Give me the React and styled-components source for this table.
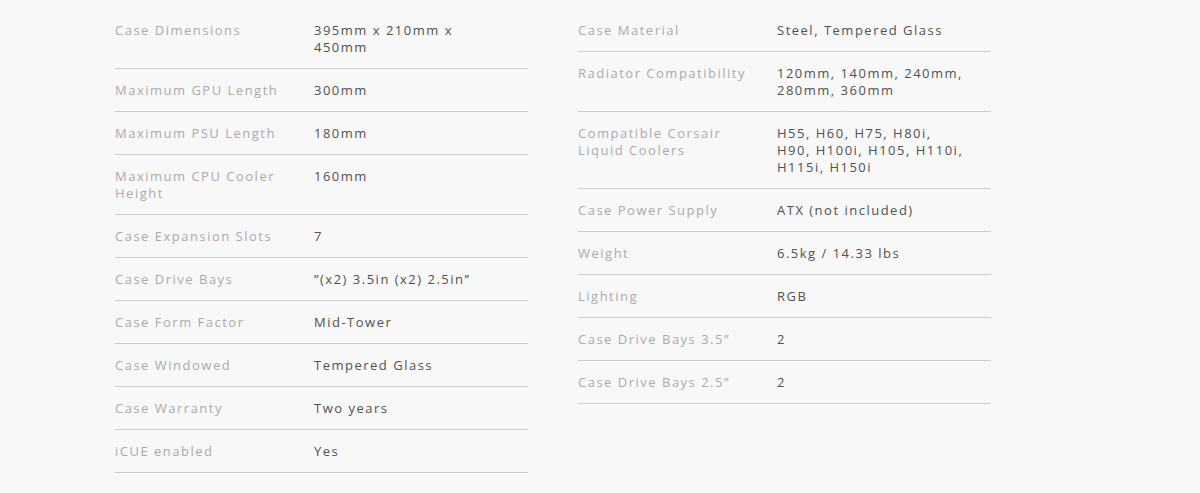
import React from "react";
import styled, { createGlobalStyle } from "styled-components";

const Global = createGlobalStyle`
  html, body { margin: 0; padding: 0; background: #f8f8f8; }
  body { padding: 9px 0 0; font-family: "Open Sans", "Liberation Sans", sans-serif; }
`;

const Page = styled.div`
  display: flex;
  gap: 50px;
  padding-left: 115px;
  align-items: flex-start;
`;

const Column = styled.div`
  width: 413px;
  display: flex;
  flex-direction: column;
`;

const Row = styled.div`
  display: grid;
  grid-template-columns: 199px 190px;
  padding: 13px 0 12px;
  border-bottom: 1px solid #cdcdcd;
  font-size: 13px;
  line-height: 17px;
  letter-spacing: 1.5px;
`;

const Label = styled.div`
  color: #aaaaaa;
  padding-right: 16px;
`;

const Value = styled.div`
  color: #505050;
  font-weight: 500;
`;

const left = [
  ["Case Dimensions", "395mm x 210mm x 450mm"],
  ["Maximum GPU Length", "300mm"],
  ["Maximum PSU Length", "180mm"],
  ["Maximum CPU Cooler Height", "160mm"],
  ["Case Expansion Slots", "7"],
  ["Case Drive Bays", "”(x2) 3.5in (x2) 2.5in”"],
  ["Case Form Factor", "Mid-Tower"],
  ["Case Windowed", "Tempered Glass"],
  ["Case Warranty", "Two years"],
  ["iCUE enabled", "Yes"],
];

const right = [
  ["Case Material", "Steel, Tempered Glass"],
  ["Radiator Compatibility", "120mm, 140mm, 240mm, 280mm, 360mm"],
  ["Compatible Corsair Liquid Coolers", "H55, H60, H75, H80i, H90, H100i, H105, H110i, H115i, H150i"],
  ["Case Power Supply", "ATX (not included)"],
  ["Weight", "6.5kg / 14.33 lbs"],
  ["Lighting", "RGB"],
  ["Case Drive Bays 3.5”", "2"],
  ["Case Drive Bays 2.5”", "2"],
];

const Spec = ({ items }) => (
  <Column>
    {items.map(([k, v]) => (
      <Row key={k}>
        <Label>{k}</Label>
        <Value>{v}</Value>
      </Row>
    ))}
  </Column>
);

export default function App() {
  return (
    <>
      <Global />
      <Page>
        <Spec items={left} />
        <Spec items={right} />
      </Page>
    </>
  );
}
